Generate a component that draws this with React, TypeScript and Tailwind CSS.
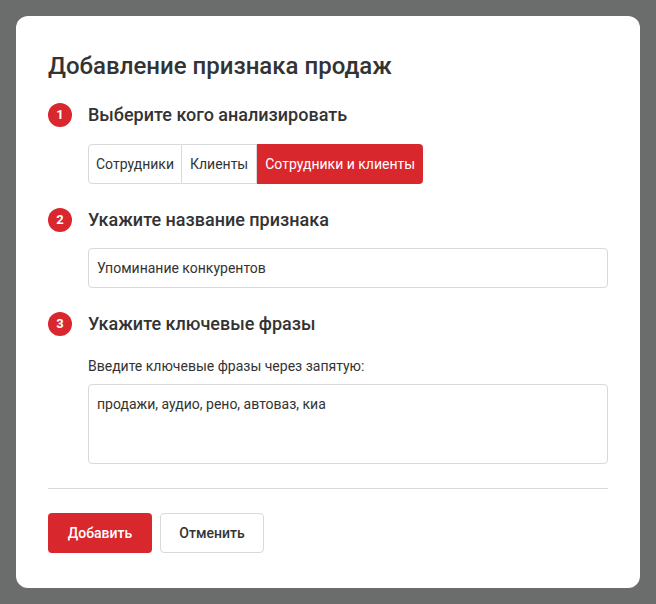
export default function App() {
  const steps = [
    'Выберите кого анализировать',
    'Укажите название признака',
    'Укажите ключевые фразы',
  ]

  return (
    <div className="min-h-screen bg-[#6b6c6c] p-4 font-['Roboto',sans-serif] text-[#333]">
      <div className="bg-white rounded-xl px-8 pt-[34px] pb-[35px]">
        <h1 className="text-[24px] leading-[32px] font-medium text-[#333]">Добавление признака продаж</h1>

        <div className="mt-[21px] flex items-center gap-4">
          <StepBadge n={1} />
          <h2 className="text-[18px] leading-[24px] font-medium">{steps[0]}</h2>
        </div>
        <div className="ml-10 mt-[17px] flex text-[14px] leading-[38px]">
          <button className="h-10 px-[7px] border border-[#d9d9d9] rounded-l bg-white text-[#333]">Сотрудники</button>
          <button className="h-10 px-2 border-y border-r border-[#d9d9d9] bg-white text-[#333]">Клиенты</button>
          <button className="h-10 px-2 rounded-r bg-[#d9272e] text-white">Сотрудники и клиенты</button>
        </div>

        <div className="mt-6 flex items-center gap-4">
          <StepBadge n={2} />
          <h2 className="text-[18px] leading-[24px] font-medium">{steps[1]}</h2>
        </div>
        <div className="ml-10 mt-4">
          <input
            className="block w-full h-10 px-2 border border-[#d9d9d9] rounded text-[14px] text-[#333] outline-none"
            defaultValue="Упоминание конкурентов"
          />
        </div>

        <div className="mt-6 flex items-center gap-4">
          <StepBadge n={3} />
          <h2 className="text-[18px] leading-[24px] font-medium">{steps[2]}</h2>
        </div>
        <div className="ml-10 mt-5">
          <p className="text-[14px] leading-[20px] text-[#333]">Введите ключевые фразы через запятую:</p>
          <textarea
            className="mt-2 block w-full h-20 px-2 py-[9px] border border-[#d9d9d9] rounded text-[14px] leading-[20px] text-[#333] outline-none resize-none"
            defaultValue="продажи, аудио, рено, автоваз, киа"
          />
        </div>

        <div className="mt-6 border-t border-[#d9d9d9]" />

        <div className="mt-6 flex gap-2">
          <button className="w-[104px] h-10 rounded bg-[#d9272e] text-white text-[14px] font-medium">Добавить</button>
          <button className="w-[104px] h-10 rounded border border-[#d9d9d9] bg-white text-[#333] text-[14px] font-medium">Отменить</button>
        </div>
      </div>
    </div>
  )
}

function StepBadge({ n }: { n: number }) {
  return (
    <span className="w-6 h-6 rounded-full bg-[#d9272e] text-white text-[13px] font-bold flex items-center justify-center">
      {n}
    </span>
  )
}
